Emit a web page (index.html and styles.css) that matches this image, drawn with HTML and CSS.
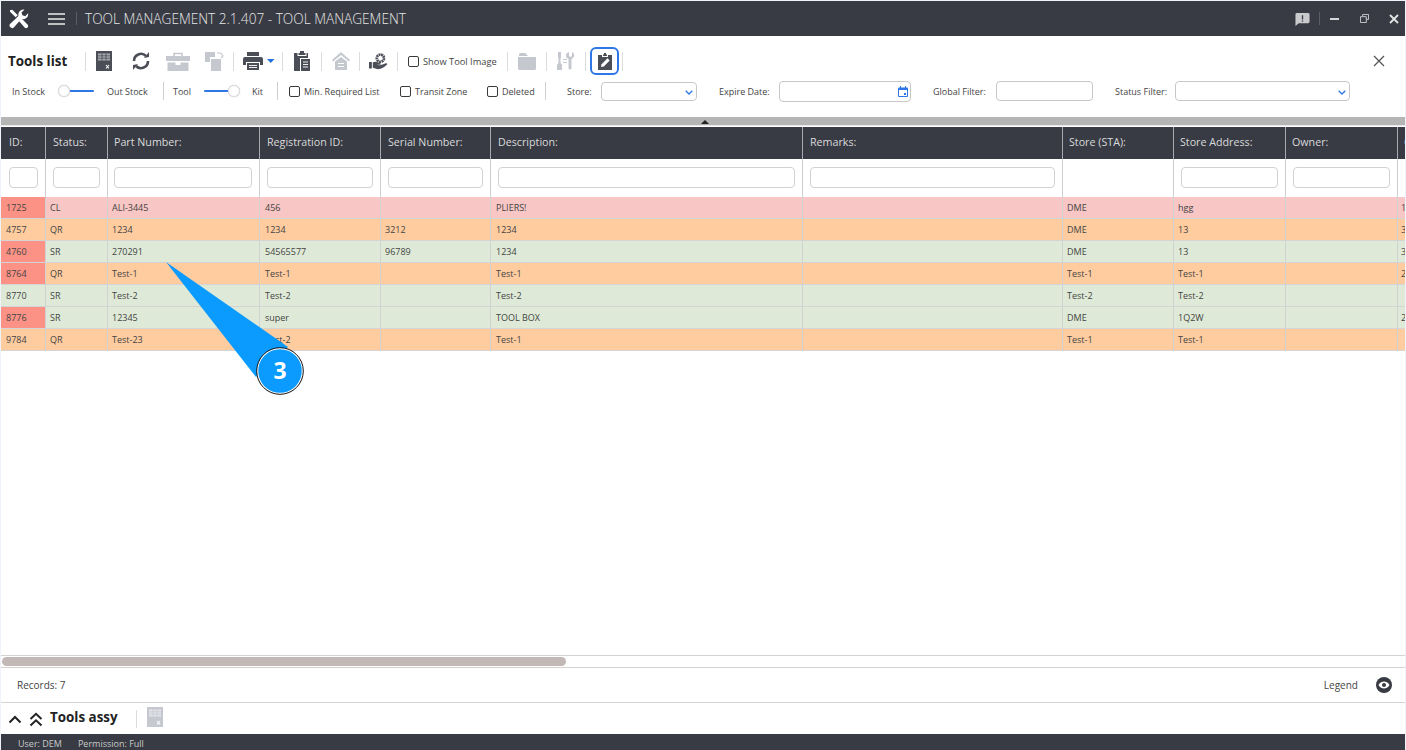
FILE: index.html
```html
<!DOCTYPE html>
<html lang="en">
<head>
<meta charset="utf-8">
<title>Tool Management</title>
<link rel="stylesheet" href="styles.css">
</head>
<body>
<div class="app">
  <header class="titlebar">
    <svg class="logo" viewBox="0 0 24 24"><path d="M4 1L10.500 7.500 8 10 1.500 3.500 1 1.500zM9 11l2.800-2.800 10.700 10.800a2.500 2.500 0 0 1-3.500 3.500z" fill="#fff"/><path d="M23 6.500a6 6 0 0 1-8 5.300L6 21.800a3 3 0 0 1-4.500-4L11.500 8.500A6 6 0 0 1 18.500.8l-3.500 3.500 1 3.300 3.500 1L23 5z" fill="#fff"/></svg>
    <svg class="burger" viewBox="0 0 17 12"><path d="M0 1h17M0 6h17M0 11h17" stroke="#eceded" stroke-width="1.500"/></svg>
    <span class="tb-sep"></span>
    <span class="app-title">TOOL MANAGEMENT 2.1.407 - TOOL MANAGEMENT</span>
    <span class="win-controls">
      <svg class="win-msg" viewBox="0 0 16 16"><path d="M2 1h12a1.500 1.500 0 0 1 1.500 1.500v8A1.500 1.500 0 0 1 14 12H4l-3.500 3V2.500A1.500 1.500 0 0 1 2 1z" fill="#c9cacc"/><path d="M8 3.500v4.500M8 9v1.500" stroke="#383b43" stroke-width="1.400"/></svg>
      <span class="tb-sep-r"></span>
      <svg class="win-min" viewBox="0 0 9 9"><path d="M0 5h9" stroke="#d5d6d8" stroke-width="2"/></svg>
      <svg class="win-max" viewBox="0 0 10 10"><path d="M3 2.500V.5h6.500v5.500H7.500M.5 3h6.500v6.500H.5z" fill="none" stroke="#d5d6d8" stroke-width="1"/></svg>
      <svg class="win-close" viewBox="0 0 10 10"><path d="M1 1l8 8M9 1l-8 8" stroke="#e3e4e5" stroke-width="1.800"/></svg>
    </span>
  </header>

  <section class="toolbar">
    <div class="row-one">
      <strong class="section-title">Tools list</strong>
      <span class="sep"></span>
      <svg class="ico xls" viewBox="0 0 16 20"><rect width="16" height="20" fill="#4b4e56"/><path d="M2 2.500h12v7H2z" fill="#a8aab0"/><path d="M2 4.800h12M2 7.200h12M6 2.500v7M10 2.500v7" stroke="#4b4e56" stroke-width=".8"/><path d="M10 14l3 3.500M13 14l-3 3.500" stroke="#fff" stroke-width="1.100"/></svg>
      <svg class="ico refresh" viewBox="0 0 20 20"><path d="M3 10a7 7 0 0 1 12-5" fill="none" stroke="#4b4e56" stroke-width="2.600"/><path d="M17 10a7 7 0 0 1-12 5" fill="none" stroke="#4b4e56" stroke-width="2.600"/><path d="M13 7l5-1V1zM7 13l-5 1v5z" fill="#4b4e56"/></svg>
      <svg class="ico box" viewBox="0 0 24 19"><path d="M8 4V1.500h8V4" fill="none" stroke="#c6c8d0" stroke-width="1.500"/><path d="M0 4h24v5H0zM1.500 10.500h8V13h5v-2.500h8V19h-21z" fill="#c6c8d0"/></svg>
      <svg class="ico copy" viewBox="0 0 19 19"><path d="M0 0h10v5H5v5H0zM6 7h10v12H6z" fill="#c6c8d0"/><path d="M12 1h4l2 3-2 2" fill="none" stroke="#c6c8d0" stroke-width="1.200"/></svg>
      <span class="sep"></span>
      <svg class="ico printer" viewBox="0 0 20 18"><path d="M4 0h12v4H4zM2 5h16a2 2 0 0 1 2 2v6h-3v-3H3v3H0V7a2 2 0 0 1 2-2zM4 11h12v7H4z" fill="#4b4e56"/><path d="M6 13.500h8M6 15.500h8" stroke="#fff" stroke-width=".9"/></svg>
      <svg class="caret" viewBox="0 0 8 4"><path d="M0 0h7.500L3.750 4z" fill="#1f6fe0"/></svg>
      <span class="sep"></span>
      <svg class="ico clip" viewBox="0 0 16 20"><path d="M4.500 2H6V0h4v2h1.500v2h-7zM0 2h3.500v3h9V2H14v5H6v13H0zM7 8h9v12H7z" fill="#4b4e56"/><path d="M9 11h5M9 13.500h5M9 16h5" stroke="#fff" stroke-width=".9"/></svg>
      <span class="sep"></span>
      <svg class="ico home" viewBox="0 0 18 18"><path d="M9 0l9 8-1 1.500L9 3 1 9.500 0 8z" fill="#c6c8d0"/><path d="M3 9.500L9 5l6 4.500V18H3z" fill="#c6c8d0"/><path d="M6 11.500h6M12 14.500H6" stroke="#fff" stroke-width="1.100"/></svg>
      <span class="sep"></span>
      <svg class="ico hand" viewBox="0 0 20 18"><circle cx="12" cy="6" r="3.800" fill="none" stroke="#4b4e56" stroke-width="2.800" stroke-dasharray="2 .6"/><path d="M0 10h3v7H0zM4 10.500c3-1.500 5 0 7 .5 2 .5 2 2-.5 2H8c3 .7 4.500.4 9-1.500 2-.7 3 .6 1.500 1.800C15 16.500 12 18 8.500 17.500L4 16z" fill="#4b4e56"/></svg>
      <span class="sep"></span>
      <span class="check"></span>
      <span class="lbl lbl-wide">Show Tool Image</span>
      <span class="sep"></span>
      <svg class="ico folder" viewBox="0 0 18 17"><path d="M1 3V1.500A1.500 1.500 0 0 1 2.500 0h5L10 3zM0 4h18v11.500a1.500 1.500 0 0 1-1.500 1.500h-15A1.500 1.500 0 0 1 0 15.500z" fill="#c6c8d0"/></svg>
      <span class="sep"></span>
      <svg class="ico tools" viewBox="0 0 20 18"><path d="M2 0h3v5.500L4.500 7v4l1.500 1.500V18H1v-5.500L2.500 11V7L2 5.500zM13 0v4l1.500 1 1.500-1V0c2.500 1 3.500 5-.5 7v9a1.200 1.200 0 0 1-3 0V7c-4-2-3-6 .5-7z" fill="#c6c8d0"/><path d="M7 7.500h4M7 10.500h4" stroke="#c6c8d0" stroke-width="1"/></svg>
      <span class="sep sep-tight"></span>
      <span class="active-btn"><svg viewBox="0 0 14 17"><path d="M5 1.500h1V0h2v1.500h1V3H5zM0 2h4v2h6V2h4v15H0z" fill="#4b4e56"/><path d="M3 14l.6-2.800L9.500 5.300l2.200 2.200-5.900 5.900z" fill="#fff"/></svg></span>
      <span class="sep"></span>
      <svg class="close-x" viewBox="0 0 12 12"><path d="M1 1l10 10M11 1L1 11" stroke="#555" stroke-width="1.300"/></svg>
    </div>
    <div class="row-two">
      <span class="lbl">In Stock</span>
      <span class="toggle"><span class="track"></span><span class="thumb thumb-left"></span></span>
      <span class="lbl">Out Stock</span>
      <span class="sep sep-low"></span>
      <span class="lbl">Tool</span>
      <span class="toggle"><span class="track track-full"></span><span class="thumb thumb-right"></span></span>
      <span class="lbl">Kit</span>
      <span class="sep sep-low"></span>
      <span class="check"></span>
      <span class="lbl">Min. Required List</span>
      <span class="check"></span>
      <span class="lbl">Transit Zone</span>
      <span class="check"></span>
      <span class="lbl">Deleted</span>
      <span class="sep sep-low"></span>
      <span class="lbl">Store:</span>
      <span class="field field-store"><svg class="chev" viewBox="0 0 8 5"><path d="M.7.7L4 4l3.300-3.300" fill="none" stroke="#2f76e6" stroke-width="1.300"/></svg></span>
      <span class="lbl">Expire Date:</span>
      <span class="field field-date"><svg class="cal" viewBox="0 0 10 11"><path d="M1 1.500h8a1 1 0 0 1 1 1V10a1 1 0 0 1-1 1H1a1 1 0 0 1-1-1V2.500a1 1 0 0 1 1-1zM2 0h1v2H2zM7 0h1v2H7z" fill="#2f76e6"/><path d="M1 4h8v6H1z" fill="#fff"/><path d="M6 7h2v2H6z" fill="#2f76e6"/></svg></span>
      <span class="lbl">Global Filter:</span>
      <span class="field field-global"></span>
      <span class="lbl">Status Filter:</span>
      <span class="field field-status"><svg class="chev" viewBox="0 0 8 5"><path d="M.7.7L4 4l3.300-3.300" fill="none" stroke="#2f76e6" stroke-width="1.300"/></svg></span>
    </div>
  </section>

  <div class="splitter"><span class="up-tri"></span></div>

  <main class="grid-wrap">
    <table class="grid">
      <colgroup>
        <col class="c-id"><col class="c-status"><col class="c-part"><col class="c-reg"><col class="c-serial"><col class="c-desc"><col class="c-rem"><col class="c-store"><col class="c-addr"><col class="c-owner"><col class="c-more">
      </colgroup>
      <thead>
        <tr class="head">
          <th>ID:</th><th>Status:</th><th>Part Number:</th><th>Registration ID:</th><th>Serial Number:</th><th>Description:</th><th>Remarks:</th><th>Store (STA):</th><th>Store Address:</th><th>Owner:</th><th>Calibration:</th>
        </tr>
        <tr class="filters">
          <td><span class="filter"></span></td><td><span class="filter"></span></td><td><span class="filter"></span></td><td><span class="filter"></span></td><td><span class="filter"></span></td><td><span class="filter"></span></td><td><span class="filter"></span></td><td></td><td><span class="filter"></span></td><td><span class="filter"></span></td><td><span class="filter"></span></td>
        </tr>
      </thead>
      <tbody>
        <tr class="r-red"><td class="id-alert">1725</td><td>CL</td><td>ALI-3445</td><td>456</td><td></td><td>PLIERS!</td><td></td><td>DME</td><td>hgg</td><td></td><td>1</td></tr>
        <tr class="r-orange"><td>4757</td><td>QR</td><td>1234</td><td>1234</td><td>3212</td><td>1234</td><td></td><td>DME</td><td>13</td><td></td><td>3</td></tr>
        <tr class="r-green"><td class="id-alert">4760</td><td>SR</td><td>270291</td><td>54565577</td><td>96789</td><td>1234</td><td></td><td>DME</td><td>13</td><td></td><td>3</td></tr>
        <tr class="r-orange"><td class="id-alert">8764</td><td>QR</td><td>Test-1</td><td>Test-1</td><td></td><td>Test-1</td><td></td><td>Test-1</td><td>Test-1</td><td></td><td>2</td></tr>
        <tr class="r-green"><td>8770</td><td>SR</td><td>Test-2</td><td>Test-2</td><td></td><td>Test-2</td><td></td><td>Test-2</td><td>Test-2</td><td></td><td></td></tr>
        <tr class="r-green"><td class="id-alert">8776</td><td>SR</td><td>12345</td><td>super</td><td></td><td>TOOL BOX</td><td></td><td>DME</td><td>1Q2W</td><td></td><td>2</td></tr>
        <tr class="r-orange"><td>9784</td><td>QR</td><td>Test-23</td><td>Test-2</td><td></td><td>Test-1</td><td></td><td>Test-1</td><td>Test-1</td><td></td><td></td></tr>
      </tbody>
    </table>
    <svg class="callout" viewBox="0 0 160 140">
      <path d="M5 5L127 90 95 120z" fill="#0b9bff"/>
      <circle cx="119" cy="114" r="22.500" fill="#0b9bff" stroke="#fff" stroke-width="1.500"/>
      <circle cx="119" cy="114" r="23.300" fill="none" stroke="#111" stroke-width="1"/>
      <text x="119" y="122" text-anchor="middle" class="callout-num">3</text>
    </svg>
  </main>

  <div class="hscroll"><span class="hthumb"></span></div>

  <div class="records">
    <span class="rec-text">Records: 7</span>
    <span class="legend">Legend</span>
    <svg class="eye" viewBox="0 0 16 16"><circle cx="8" cy="8" r="8" fill="#383b43"/><path d="M2.500 8C4 5.300 6 4.500 8 4.500s4 .8 5.500 3.500C12 10.700 10 11.500 8 11.500S4 10.700 2.500 8z" fill="#fff"/><circle cx="8" cy="8" r="2" fill="#383b43"/></svg>
  </div>

  <div class="assy">
    <svg class="chev-one" viewBox="0 0 14 9"><path d="M1.500 7.500L7 2l5.500 5.500" fill="none" stroke="#222" stroke-width="2"/></svg>
    <svg class="chev-two" viewBox="0 0 14 15"><path d="M1.500 7L7 1.800 12.500 7M1.500 13.500L7 8.300l5.500 5.200" fill="none" stroke="#222" stroke-width="2"/></svg>
    <strong class="section-title assy-title">Tools assy</strong>
    <span class="sep"></span>
    <svg class="ico xls-off" viewBox="0 0 16 20"><rect width="16" height="20" fill="#c6c8d0"/><path d="M2 2.500h12v7H2z" fill="#e4e5e9"/><path d="M2 4.800h12M2 7.200h12M6 2.500v7M10 2.500v7" stroke="#c6c8d0" stroke-width=".8"/><path d="M10 14l3 3.500M13 14l-3 3.500" stroke="#fff" stroke-width="1.100"/></svg>
  </div>

  <footer class="statusbar">
    <span>User: DEM</span>
    <span>Permission: Full</span>
  </footer>
</div>
</body>
</html>
```

FILE: styles.css
```css
* { box-sizing: border-box; }
html, body { margin: 0; height: 100%; }
body {
  background: #eef3f9;
  font-family: "Open Sans", "Liberation Sans", sans-serif;
  color: #444;
  overflow: hidden;
}
.app {
  width: 1406px;
  height: 750px;
  padding: 1px 1px 0 1px;
  display: flex;
  flex-direction: column;
  overflow: hidden;
}

/* title bar */
.titlebar {
  flex: none;
  height: 35px;
  background: #383b43;
  display: flex;
  align-items: center;
  padding-left: 8px;
  color: #e6e7e8;
}
.logo { width: 20px; height: 20px; flex: none; }
.burger { width: 17px; height: 12px; margin-left: 19px; flex: none; }
.tb-sep { width: 1px; height: 13px; background: #5b5e66; margin-left: 11px; }
.app-title { margin-left: 8px; font-size: 13.650px; font-weight: 300; white-space: nowrap; }
.win-controls { margin-left: auto; display: flex; align-items: center; height: 100%; }
.win-msg { width: 15px; height: 15px; margin-top: 2px; }
.tb-sep-r { width: 1px; height: 13px; background: #5b5e66; margin-left: 9px; }
.win-min { width: 9px; height: 9px; margin-left: 10px; }
.win-max { width: 9px; height: 9px; margin-left: 21px; }
.win-close { width: 10px; height: 10px; margin-left: 20px; margin-right: 6px; }

/* toolbar */
.toolbar { flex: none; height: 81px; background: #fff; padding-left: 7px; }
.row-one {
  height: 40px;
  padding-top: 10px;
  padding-right: 20px;
  display: grid;
  grid-template-columns: 77px 11px 35px 35px 39px 28px 10px 24px 15px 12px 27px 11px 27px 10px 28px 11px 15px 84px 11px 28px 10px 29px 5px 32px 4px 1fr;
  align-items: center;
}
.row-two {
  height: 30px;
  margin-top: 0;
  padding-left: 4px;
  display: grid;
  grid-template-columns: 46px 49px 56px 10px 31px 48px 25px 12px 15px 96px 15px 72px 15px 43px 22px 34px 118px 60px 154px 63px 119px 60px 175px;
  align-items: center;
}
.section-title { font-size: 13.400px; font-weight: 700; color: #222; white-space: nowrap; }
.sep { display: block; width: 1px; height: 19px; background: #dcdcdc; }
.sep-low { height: 18px; background: #cfcfcf; }
.lbl { font-size: 9px; color: #444; white-space: nowrap; }
.lbl-wide { font-size: 9.300px; }
.ico { display: block; }
.xls { width: 16px; height: 20px; }
.refresh { width: 20px; height: 20px; }
.box { width: 24px; height: 19px; }
.copy { width: 19px; height: 19px; }
.printer { width: 20px; height: 18px; }
.caret { width: 8px; height: 4px; }
.clip { width: 16px; height: 20px; }
.home { width: 18px; height: 18px; }
.hand { width: 19px; height: 18px; }
.folder { width: 18px; height: 17px; }
.tools { width: 20px; height: 18px; }
.check {
  display: block;
  width: 11px;
  height: 11px;
  border: 1.300px solid #3a3a3a;
  border-radius: 2px;
  background: #fff;
}
.active-btn {
  width: 29px;
  height: 28px;
  border: 2px solid #2f76e6;
  border-radius: 6px;
  display: flex;
  align-items: center;
  justify-content: center;
}
.active-btn svg { width: 14px; height: 17px; }
.close-x { width: 12px; height: 12px; justify-self: end; }

.toggle { position: relative; display: block; width: 36px; height: 14px; }
.track { position: absolute; left: 3px; right: 0; top: 6px; height: 2px; background: #2f76e6; border-radius: 1px; }
.track-full { left: 0; }
.thumb {
  position: absolute;
  top: 1px;
  width: 12px;
  height: 12px;
  border-radius: 50%;
  background: #fff;
  border: 1px solid #dcdcdc;
  box-shadow: 0 0 1px #bbb;
}
.thumb-left { left: 0; }
.thumb-right { right: 0; }

.field {
  display: flex;
  align-items: center;
  justify-content: flex-end;
  height: 19px;
  background: #fff;
  border: 1px solid #cbc6c6;
  border-radius: 4px;
}
.field-store { width: 96px; padding-right: 3px; }
.field-date { width: 132px; height: 21px; padding-right: 2px; }
.field-global { width: 97px; height: 20px; }
.field-status { width: 175px; height: 20px; padding-right: 3px; }
.chev { width: 8px; height: 5px; margin-top: 2px; }
.cal { width: 10px; height: 11px; margin-top: 1px; }

/* splitter */
.splitter {
  flex: none;
  height: 9px;
  background: #b5b5b5;
  border-bottom: 1px solid #e8e8e8;
  display: flex;
  justify-content: center;
  padding-top: 3px;
}
.up-tri {
  width: 0;
  height: 0;
  border-left: 4px solid transparent;
  border-right: 4px solid transparent;
  border-bottom: 4px solid #222;
  margin-left: 4px;
}

/* grid */
.grid-wrap {
  position: relative;
  flex: 1;
  min-height: 0;
  background: #fff;
  overflow: hidden;
  padding-top: 1px;
}
.grid {
  border-collapse: separate;
  border-spacing: 0;
  table-layout: fixed;
  width: 1500px;
}
.c-id { width: 45px; }
.c-status { width: 62px; }
.c-part { width: 152px; }
.c-reg { width: 121px; }
.c-serial { width: 110px; }
.c-desc { width: 312px; }
.c-rem { width: 260px; }
.c-store { width: 111px; }
.c-addr { width: 112px; }
.c-owner { width: 112px; }
.c-more { width: 103px; }

.head th {
  height: 32px;
  padding: 0 0 3px 7px;
  background: #383b43;
  color: #d9dadc;
  font-size: 10.700px;
  font-weight: 400;
  text-align: left;
  white-space: nowrap;
  border-right: 1px solid #a9aaae;
}
.head th:first-child { padding-left: 8px; }
.head th:nth-child(3), .head th:nth-child(n+8) { padding-left: 6px; }
.filters td {
  height: 38px;
  padding: 0 7px 2px;
  border-right: 1px solid #cfcfcf;
  background: #fff;
  vertical-align: middle;
}
.filters td:first-child { padding-left: 8px; }
.filters td:nth-child(3) { padding-left: 6px; }
.filter {
  display: block;
  height: 21px;
  background: #fff;
  border: 1px solid #d5d1d1;
  border-radius: 4px;
}
tbody td {
  height: 22px;
  padding: 0 0 0 4px;
  font-size: 9px;
  color: #444;
  border-right: 1px solid #cfd2d0;
  border-bottom: 1px solid #d4d4d4;
  white-space: nowrap;
  overflow: hidden;
}
tbody td:first-child,
tbody td:nth-child(4),
tbody td:nth-child(6) { padding-left: 5px; }
tbody td:last-child { padding-left: 3px; }
.r-red td { background: #f7c6c5; }
.r-orange td { background: #ffcc9f; }
.r-green td { background: #deead7; }
tbody td.id-alert { background: #fb9285; }

.callout {
  position: absolute;
  left: 160px;
  top: 131px;
  width: 160px;
  height: 140px;
}
.callout-num { font-size: 23px; font-weight: 700; fill: #fff; font-family: "Open Sans", sans-serif; }

/* horizontal scrollbar */
.hscroll {
  flex: none;
  height: 13px;
  background: #fff;
  border-top: 1px solid #d6d2d2;
  border-bottom: 1px solid #d6d2d2;
  padding: 1px 0 0 1px;
}
.hthumb {
  display: block;
  width: 564px;
  height: 9px;
  border-radius: 5px;
  background: #c2b8b5;
}

/* records */
.records {
  flex: none;
  height: 35px;
  background: #fff;
  border-bottom: 1px solid #d6d2d2;
  display: flex;
  align-items: center;
  padding: 0 13px 0 16px;
}
.rec-text, .legend { font-size: 10px; color: #444; }
.legend { margin-left: auto; }
.eye { width: 16px; height: 16px; margin-left: 18px; }

/* assy */
.assy {
  flex: none;
  height: 31px;
  background: #fff;
  display: flex;
  align-items: center;
  padding-left: 7px;
}
.chev-one { width: 14px; height: 9px; margin-top: 1px; }
.chev-two { width: 14px; height: 15px; margin-left: 7px; margin-top: 1px; }
.assy-title { margin-left: 7px; margin-top: -3px; }
.assy .sep { margin-left: 18px; height: 18px; }
.xls-off { width: 16px; height: 20px; margin-left: 10px; margin-top: -3px; }

/* status bar */
.statusbar {
  flex: none;
  height: 16px;
  background: #383b43;
  color: #c9cacc;
  font-size: 9px;
  display: flex;
  align-items: center;
  gap: 16px;
  padding-left: 17px;
  padding-top: 2px;
}
```
